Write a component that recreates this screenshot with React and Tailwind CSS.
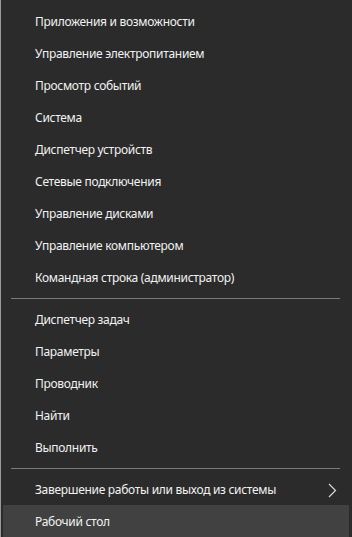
import React from 'react';

const groups = [
  [
    'Приложения и возможности',
    'Управление электропитанием',
    'Просмотр событий',
    'Система',
    'Диспетчер устройств',
    'Сетевые подключения',
    'Управление дисками',
    'Управление компьютером',
    'Командная строка (администратор)',
  ],
  ['Диспетчер задач', 'Параметры', 'Проводник', 'Найти', 'Выполнить'],
];

const Item = ({ label, arrow, active }) => (
  <div className={`h-8 flex items-center justify-between pl-8 pr-3 pt-[2px] ${active ? 'bg-[#414141]' : ''}`}>
    <span>{label}</span>
    {arrow && (
      <svg width="9" height="15" viewBox="0 0 9 15" fill="none" stroke="#d8d8d8" strokeWidth="1.2">
        <path d="M1 1l6.5 6.5L1 14" />
      </svg>
    )}
  </div>
);

const Separator = () => (
  <div className="h-[10px] flex items-center pl-2 pr-[9px]">
    <div className="h-px w-full bg-[#7a7a7a]" />
  </div>
);

export default function App() {
  return (
    <div
      className="w-[352px] h-[537px] bg-[#2b2b2b] border-l border-[#9a9a9a] text-[12px] tracking-[-0.3px] text-[#f2f2f2] pt-[5px] pl-[2px] pr-[3px] overflow-hidden"
      style={{ fontFamily: '"Noto Sans", "Open Sans", sans-serif' }}
    >
      {groups[0].map(l => <Item key={l} label={l} />)}
      <Separator />
      {groups[1].map(l => <Item key={l} label={l} />)}
      <Separator />
      <Item label="Завершение работы или выход из системы" arrow />
      <Item label="Рабочий стол" active />
    </div>
  );
}
